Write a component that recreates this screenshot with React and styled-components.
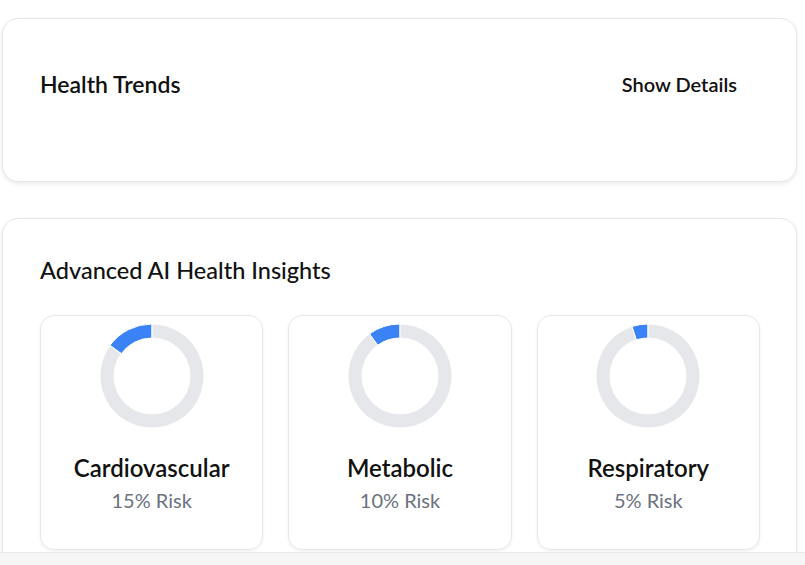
import React from "react";
import styled, { createGlobalStyle } from "styled-components";

const GlobalStyle = createGlobalStyle`
  html, body {
    margin: 0;
    padding: 0;
    background: #f5f5f5;
    font-family: Lato, "Open Sans", sans-serif;
    color: #111;
  }
  * { box-sizing: border-box; }
`;

const risks = [
  { name: "Cardiovascular", value: 15 },
  { name: "Metabolic", value: 10 },
  { name: "Respiratory", value: 5 },
];

// sector path between two angles (degrees, math orientation, y up)
function sector(cx, cy, r0, r1, a0, a1) {
  const rad = (a) => (a * Math.PI) / 180;
  const p = (r, a) => [cx + r * Math.cos(rad(a)), cy - r * Math.sin(rad(a))];
  const large = Math.abs(a1 - a0) > 180 ? 1 : 0;
  const [x0, y0] = p(r1, a0);
  const [x1, y1] = p(r1, a1);
  const [x2, y2] = p(r0, a1);
  const [x3, y3] = p(r0, a0);
  return `M${x0},${y0} A${r1},${r1} 0 ${large} 0 ${x1},${y1} L${x2},${y2} A${r0},${r0} 0 ${large} 1 ${x3},${y3} Z`;
}

function Donut({ value }) {
  const end = 90 + (value / 100) * 360;
  return (
    <svg width="120" height="120" viewBox="0 0 120 120">
      <path d={sector(60, 60, 38, 52, 90, end)} fill="#3b82f6" stroke="#fff" strokeWidth="1" />
      <path d={sector(60, 60, 38, 52, end, 450)} fill="#e5e7eb" stroke="#fff" strokeWidth="1" />
    </svg>
  );
}

export default function App() {
  return (
    <>
      <GlobalStyle />
      <Page>
        <TrendsCard>
          <Title>Health Trends</Title>
          <DetailsButton>Show Details</DetailsButton>
        </TrendsCard>
        <InsightsCard>
          <SectionTitle>Advanced AI Health Insights</SectionTitle>
          <RiskGrid>
            {risks.map((r) => (
              <RiskCard key={r.name}>
                <Donut value={r.value} />
                <RiskName>{r.name}</RiskName>
                <RiskValue>{r.value}% Risk</RiskValue>
              </RiskCard>
            ))}
          </RiskGrid>
        </InsightsCard>
      </Page>
    </>
  );
}

const Page = styled.div`
  height: 553px;
  overflow: hidden;
  background: #fff;
  border-bottom: 1px solid #e9e9e9;
  padding: 18px 8px 0 2px;
  display: flex;
  flex-direction: column;
  gap: 36px;
`;

const Card = styled.section`
  background: #fff;
  border: 1px solid #e5e7eb;
  border-radius: 16px;
  box-shadow: 0 2px 4px rgba(0, 0, 0, 0.08);
`;

const TrendsCard = styled(Card)`
  height: 164px;
  flex-shrink: 0;
  display: flex;
  align-items: flex-start;
  justify-content: space-between;
  padding: 49px 59px 0 37px;
`;

const Title = styled.h2`
  margin: 0;
  font-size: 23px;
  font-weight: 600;
  line-height: 32px;
`;

const DetailsButton = styled.button`
  border: none;
  background: none;
  padding: 0;
  font-family: inherit;
  font-size: 20px;
  font-weight: 600;
  line-height: 32px;
  color: #111;
  cursor: pointer;
`;

const InsightsCard = styled(Card)`
  flex-shrink: 0;
  padding: 36px 36px 40px 37px;
`;

const SectionTitle = styled.h2`
  margin: 0 0 30px;
  font-size: 23.5px;
  font-weight: 500;
  line-height: 30px;
`;

const RiskGrid = styled.div`
  display: grid;
  grid-template-columns: repeat(3, 1fr);
  gap: 25px;
`;

const RiskCard = styled.div`
  height: 235px;
  border: 1px solid #e5e7eb;
  border-radius: 14px;
  box-shadow: 0 1px 3px rgba(0, 0, 0, 0.07);
  display: flex;
  flex-direction: column;
  align-items: center;
  svg { display: block; }
`;

const RiskName = styled.div`
  margin-top: 17px;
  font-size: 24px;
  font-weight: 600;
  line-height: 30px;
`;

const RiskValue = styled.div`
  margin-top: 3px;
  font-size: 20px;
  line-height: 28px;
  color: #6b7280;
`;
